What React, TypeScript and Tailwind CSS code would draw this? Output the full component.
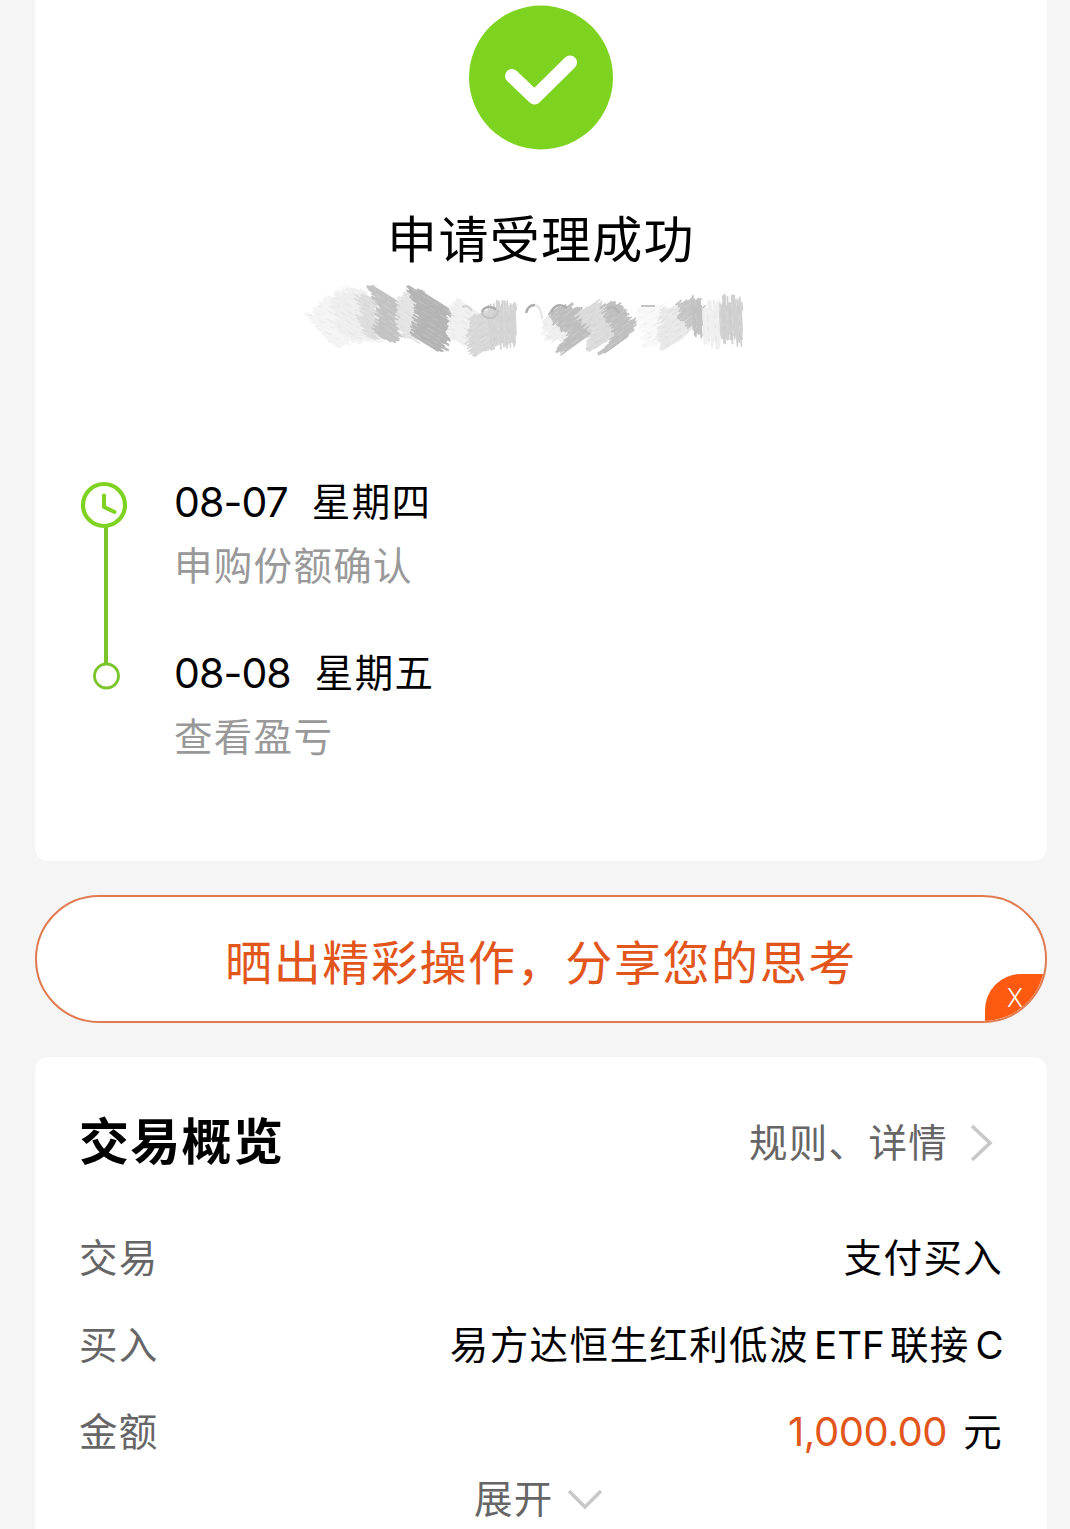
import React from "react";

interface Patch {
  color: string;
  angle: number;
  jitter: number;
  points: [number, number][];
}

interface Step {
  date: string;
  weekday: string;
  label: string;
}

const steps: Step[] = [
  { date: "08-07", weekday: "星期四", label: "申购份额确认" },
  { date: "08-08", weekday: "星期五", label: "查看盈亏" },
];

// smudged areas over the order time, drawn from back to front
const patches: Patch[] = [
  { color: "#f4f4f4", angle: 30, jitter: 9, points: [[8, 42], [30, 24], [48, 13], [64, 16], [80, 66], [50, 66], [35, 71], [22, 58]] },
  { color: "#eeeeee", angle: 30, jitter: 12, points: [[34, 26], [60, 16], [78, 60], [56, 64], [38, 56]] },
  { color: "#dddddd", angle: 32, jitter: 12, points: [[60, 20], [74, 24], [80, 60], [68, 62], [62, 46]] },
  { color: "#c3c3c3", angle: 32, jitter: 9, points: [[68, 11], [76, 12], [98, 27], [101, 36], [98, 60], [90, 66], [80, 62], [76, 56], [80, 36]] },
  { color: "#e4e4e4", angle: 32, jitter: 8, points: [[100, 22], [108, 15], [118, 26], [116, 66], [104, 62], [98, 48]] },
  { color: "#b5b5b5", angle: 32, jitter: 9, points: [[108, 12], [124, 17], [152, 36], [148, 50], [144, 73], [134, 74], [114, 62], [118, 36]] },
  { color: "#f0f0f0", angle: 34, jitter: 10, points: [[152, 36], [160, 25], [176, 36], [174, 74], [150, 64]] },
  { color: "#d8d8d8", angle: -35, jitter: 8, points: [[172, 42], [196, 34], [206, 66], [176, 80], [168, 70]] },
  { color: "#d4d4d4", angle: 88, jitter: 12, points: [[188, 32], [216, 32], [216, 66], [190, 68]] },
  { color: "#efefef", angle: -32, jitter: 10, points: [[247, 42], [262, 34], [276, 54], [262, 66], [246, 60]] },
  { color: "#bfbfbf", angle: -36, jitter: 9, points: [[252, 36], [270, 29], [292, 47], [292, 58], [264, 78], [256, 77], [270, 58], [256, 46]] },
  { color: "#dbdbdb", angle: -36, jitter: 9, points: [[278, 38], [296, 27], [320, 48], [318, 58], [288, 78], [292, 54]] },
  { color: "#c0c0c0", angle: -36, jitter: 9, points: [[304, 30], [314, 29], [334, 47], [330, 60], [304, 79], [302, 75], [318, 57], [308, 44]] },
  { color: "#f8f8f8", angle: -30, jitter: 9, points: [[340, 34], [364, 30], [370, 66], [346, 72]] },
  { color: "#e8e8e8", angle: -32, jitter: 11, points: [[362, 34], [382, 30], [394, 48], [384, 62], [364, 74], [362, 60]] },
  { color: "#c6c6c6", angle: -40, jitter: 11, points: [[378, 28], [400, 25], [402, 50], [392, 50], [382, 38]] },
  { color: "#c2c2c2", angle: 87, jitter: 13, points: [[390, 27], [402, 27], [402, 62], [394, 54]] },
  { color: "#efefef", angle: 87, jitter: 13, points: [[403, 32], [420, 32], [420, 68], [403, 64]] },
  { color: "#d0d0d0", angle: 87, jitter: 13, points: [[420, 27], [442, 28], [442, 64], [420, 62]] },
];

// small seeded generator so the hatching is the same on every render
const makeRandom = (seed: number) => {
  let s = seed;
  return () => {
    s = (s * 16807) % 2147483647;
    return s / 2147483647;
  };
};

const hatch = (patch: Patch, seed: number, step: number) => {
  const random = makeRandom(seed * 9719 + 1313);
  random();
  const a = (patch.angle * Math.PI) / 180;
  const cos = Math.cos(a);
  const sin = Math.sin(a);
  const pts = patch.points.map(([x, y]) => [x * cos + y * sin, y * cos - x * sin]);
  const vs = pts.map((p) => p[1]);
  let d = "";
  for (let v = Math.min(...vs); v < Math.max(...vs); v += step * (0.6 + random() * 0.8)) {
    const hits: number[] = [];
    pts.forEach(([u1, v1], i) => {
      const [u2, v2] = pts[(i + 1) % pts.length];
      if (v1 <= v !== v2 <= v) hits.push(u1 + ((v - v1) / (v2 - v1)) * (u2 - u1));
    });
    hits.sort((m, n) => m - n);
    for (let i = 0; i + 1 < hits.length; i += 2) {
      const from = hits[i] + (random() - 0.65) * patch.jitter;
      const to = hits[i + 1] + (random() - 0.35) * patch.jitter;
      d += `M${(from * cos - v * sin).toFixed(1)} ${(from * sin + v * cos).toFixed(1)}L${(to * cos - v * sin).toFixed(1)} ${(to * sin + v * cos).toFixed(1)}`;
    }
  }
  return d;
};

const Scribble = () => (
  <svg width="450" height="96" viewBox="0 0 450 96" fill="none">
    {patches.map((patch, i) => (
      <g key={i} stroke={patch.color}>
        <path d={hatch(patch, i + 1, 0.9)} strokeWidth="1.7" />
        <path d={hatch(patch, i + 40, 5)} stroke="#fff" strokeOpacity="0.2" strokeDasharray="5 7 9 4" />
        <path d={hatch(patch, i + 80, 6)} stroke="#888" strokeOpacity="0.12" strokeDasharray="4 8 7 5" />
      </g>
    ))}
    <g stroke="#adadad" strokeWidth="2.5">
      <path d="M182 37a8 7.5 0 0 1 14-2" />
      <path d="M182 37q1 6 8 6t8-8" stroke="#c2c2c2" strokeWidth="2" />
      <path d="M226 38q2-8 9-8" />
      <path d="M235 30q6 1 7 14" stroke="#e2e2e2" strokeWidth="2" />
      <path d="M251 37q6-11 16-4" />
      <path d="M307 34q7-5 12 4" stroke="#b4b4b4" />
      <path d="M341 31h14" stroke="#c4c4c4" strokeWidth="2" />
      <path d="M162 32q6-3 10 4" stroke="#d4d4d4" strokeWidth="2" />
    </g>
  </svg>
);

const SuccessIcon = () => (
  <svg className="overflow-visible" width="144" height="144" viewBox="0 0 144 144" fill="none">
    <circle cx="72" cy="71.5" r="72" fill="#7ed321" />
    <path
      d="M43 70 65.5 91.5 101 56.5"
      stroke="#fff"
      strokeWidth="14"
      strokeLinecap="round"
      strokeLinejoin="round"
    />
  </svg>
);

const Timeline = () => (
  <svg width="50" height="212" viewBox="0 0 50 212" fill="none">
    <path d="M26 46v138" stroke="#7cc42c" strokeWidth="4" />
    <circle cx="24" cy="24" r="21" stroke="#7ed321" strokeWidth="4.2" />
    <path d="M24 14.5V26l10.5 5" stroke="#7ed321" strokeWidth="4" strokeLinecap="round" strokeLinejoin="round" />
    <circle cx="26.5" cy="195" r="12" stroke="#7cc42c" strokeWidth="2.8" />
  </svg>
);

interface RowProps {
  label: string;
  children: React.ReactNode;
}

const Row: React.FC<RowProps> = ({ label, children }) => (
  <div className="flex h-[87px] items-center justify-between whitespace-nowrap">
    <span className="text-[#666]">{label}</span>
    <span className="text-black">{children}</span>
  </div>
);

const App = () => {
  return (
    <div className="flex h-[1529px] w-[1070px] flex-col overflow-hidden bg-[#f5f5f5] pl-[35px] pr-[23px] font-['Inter','Noto_Sans_CJK_SC',sans-serif] text-[38.5px] leading-[48px] tracking-[1.3px]">
      <section className="flex h-[861px] shrink-0 flex-col items-center rounded-b-[14px] bg-white pt-[6px]">
        <SuccessIcon />
        <h1 className="mt-[58px] text-[50px] leading-[64px] text-black">申请受理成功</h1>
        <div className="mr-[32px] mt-[3px]">
          <Scribble />
        </div>

        <div className="mt-[110px] flex w-full pl-[45px]">
          <Timeline />
          <div className="ml-[44px] -mt-[3px] flex flex-col gap-[59px]">
            {steps.map((step) => (
              <div key={step.date} className="flex flex-col gap-[16px]">
                <div className="flex text-black">
                  <span className="mr-[24px] text-[41px] tracking-[-0.9px]">{step.date}</span>
                  <span>{step.weekday}</span>
                </div>
                <div className="text-[#999]">{step.label}</div>
              </div>
            ))}
          </div>
        </div>
      </section>

      <div className="relative mt-[34px] flex h-[128px] shrink-0 items-center justify-center overflow-hidden rounded-full border-2 border-[#e07a50] bg-white pt-[7px]">
        <span className="text-[47px] tracking-[1.6px] text-[#e2551b]">晒出精彩操作，分享您的思考</span>
        <button className="absolute bottom-0 right-0 h-[47px] w-[60px] rounded-tl-[36px] bg-[#fb5a10] text-center font-['Roboto',sans-serif] text-[26px] font-light tracking-normal text-white">
          X
        </button>
      </div>

      <section className="mt-[34px] flex h-[480px] shrink-0 flex-col rounded-t-[14px] bg-white pl-[44px] pr-[44px] pt-[53px]">
        <div className="flex h-[64px] items-center justify-between">
          <h2 className="text-[50px] font-bold text-black">交易概览</h2>
          <div className="flex items-center pr-[9px] pt-[2px] text-[#666]">
            规则、详情
            <svg className="ml-[22px]" width="24" height="38" viewBox="0 0 24 38" fill="none">
              <path d="M2 2l18 17L2 36" stroke="#c8c8c8" strokeWidth="3.6" />
            </svg>
          </div>
        </div>
        <div className="mt-[40px]">
          <Row label="交易">支付买入</Row>
          <Row label="买入">
            <span className="tracking-[1.4px]">易方达恒生红利低波</span>
            <span className="ml-[5px] mr-[5px] tracking-[0.1px]">ETF</span>联接
            <span className="-mr-[2px] ml-[6px]">C</span>
          </Row>
          <Row label="金额">
            <span className="mr-[16px] text-[40px] tracking-[-0.4px] text-[#e2551b]">1,000.00</span>元
          </Row>
        </div>
        <div className="flex items-center pl-[395px] text-[#666]">
          展开
          <svg className="ml-[13px] mt-[2px]" width="36" height="22" viewBox="0 0 36 22" fill="none">
            <path d="M2 2l16 16L34 2" stroke="#c8c8c8" strokeWidth="3.4" />
          </svg>
        </div>
      </section>
    </div>
  );
};

export default App;
